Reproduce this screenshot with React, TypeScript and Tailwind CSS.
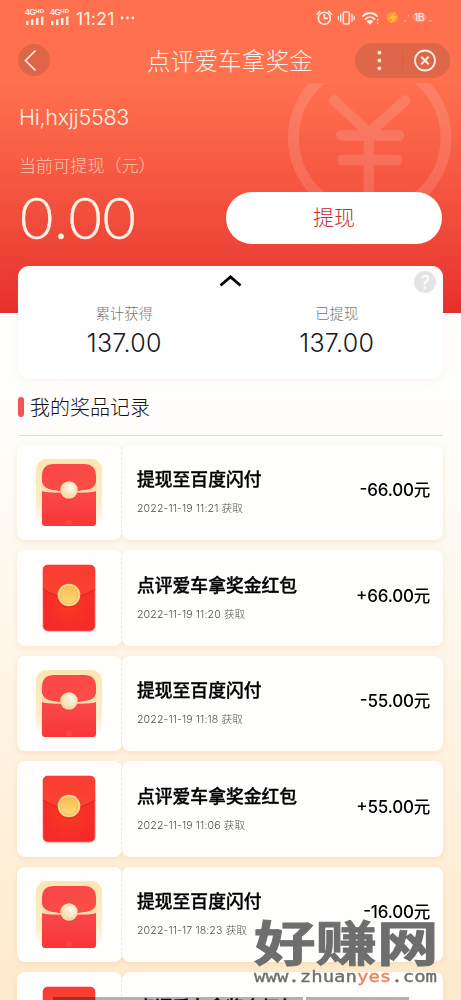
import React from "react";

const records = [
  { kind: "out", title: "提现至百度闪付", time: "2022-11-19 11:21", sign: "-", amount: "66.00" },
  { kind: "in", title: "点评爱车拿奖金红包", time: "2022-11-19 11:20", sign: "+", amount: "66.00" },
  { kind: "out", title: "提现至百度闪付", time: "2022-11-19 11:18", sign: "-", amount: "55.00" },
  { kind: "in", title: "点评爱车拿奖金红包", time: "2022-11-19 11:06", sign: "+", amount: "55.00" },
  { kind: "out", title: "提现至百度闪付", time: "2022-11-17 18:23", sign: "-", amount: "16.00" },
  { kind: "in", title: "点评爱车拿奖金红包", time: "2022-11-17 18:20", sign: "+", amount: "16.00" },
];

function Signal() {
  return (
    <div className="flex w-[20px] flex-col">
      <div className="flex h-[7px] items-start whitespace-nowrap font-['Liberation_Sans',sans-serif] text-[8.500px] leading-[7px] font-bold tracking-[-0.5px]">
        4G<span className="text-[6px] leading-[5px] tracking-[0px]">HD</span>
      </div>
      <svg className="h-[9px] w-[20px]" viewBox="0 0 20 9" fill="currentColor">
        <rect x="1" y="5" width="2.4" height="4" />
        <rect x="6" y="3.5" width="2.4" height="5.5" />
        <rect x="11" y="2" width="2.4" height="7" />
        <rect x="16" y="0.5" width="2.4" height="8.5" />
      </svg>
    </div>
  );
}

function StatusBar() {
  return (
    <div className="flex h-[36px] items-center pl-[25px] text-[#ffefe2]">
      <div className="mt-[-2px] flex gap-[5px]">
        <Signal />
        <Signal />
      </div>
      <span className="mt-[2px] ml-[6px] w-[40px] whitespace-nowrap text-[17.500px] leading-[20px] tracking-[0.3px]">11:21</span>
      <svg className="ml-[4px] h-[4px] w-[16px]" viewBox="0 0 16 4" fill="currentColor">
        <circle cx="2" cy="2" r="1.4" />
        <circle cx="7.5" cy="2" r="1.4" />
        <circle cx="13" cy="2" r="1.4" />
      </svg>
      <svg className="ml-[179px] h-[18px] w-[120px]" viewBox="315 9 120 18" fill="none" stroke="currentColor" strokeWidth="1.6" strokeLinecap="round">
        <circle cx="324.3" cy="18.2" r="6" />
        <path d="M324.3 14.8v3.6h3M317.2 14.2l2.6-2.8M331.4 14.2l-2.6-2.8" />
        <rect x="343.3" y="12" width="6" height="12" rx="1.5" />
        <path d="M340.7 14.5v7M352 14.5v7M338.4 16.5v3M354.2 16.5v3" strokeWidth="1.3" />
        <path d="M363 16c4-4 10-4 14 0M365.6 19c2.7-2.6 6.2-2.6 8.8 0" strokeWidth="1.8" />
        <path d="M366.500 21.300c2.300-1.800 4.700-1.800 7 0l-3.500 3.500z" fill="currentColor" stroke="none" />
        <path d="M377.8 19.8v.2M377.8 23v.2" strokeWidth="1.4" />
        <circle cx="392.3" cy="17.5" r="5.6" fill="#ff943f" stroke="none" />
        <path d="M395 12.500l-6 6h4l-2 4.500 6-6.500h-4z" fill="#ffc22f" stroke="#ffc22f" strokeWidth=".6" />
        <path d="M405 20.500v.5M408.500 15.500v.1M430.500 20.500v.5" opacity=".5" />
        <ellipse cx="419.500" cy="17.500" rx="7" ry="5" fill="#fff" opacity=".2" stroke="none" />
        <text x="414" y="21.300" fontSize="10.500" fill="currentColor" stroke="none" letterSpacing="-.6">1B</text>
      </svg>
    </div>
  );
}

function NavBar() {
  return (
    <div className="flex h-[48px] items-center pl-[18px]">
      <button className="flex h-[32px] w-[32px] items-center justify-center rounded-full bg-[#df6548]">
        <svg className="h-[32px] w-[32px]" viewBox="0 0 32 32" fill="none" stroke="#fff0e5" strokeWidth="1.6">
          <path d="M17.500 6.500L7.500 16.500L17.500 26.500" />
        </svg>
      </button>
      <h1 className="mt-[3px] ml-[97px] w-[170px] whitespace-nowrap text-[23.7px] leading-[32px] font-light text-[#fff1e8]">点评爱车拿奖金</h1>
      <svg className="ml-[38px] h-[35px] w-[95px]" viewBox="0 0 95 35" fill="none">
        <rect width="95" height="35" rx="17.500" fill="#de6649" />
        <path d="M47.500 8v19" stroke="#d95e43" />
        <g fill="#fff0e5">
          <circle cx="24.400" cy="9.700" r="1.900" />
          <circle cx="24.400" cy="17.500" r="1.900" />
          <circle cx="24.400" cy="25.300" r="1.900" />
        </g>
        <circle cx="70" cy="17.500" r="10" stroke="#fff0e5" strokeWidth="1.800" />
        <path d="M66.300 13.800l7.400 7.400M73.700 13.800l-7.400 7.400" stroke="#fff0e5" strokeWidth="2" />
      </svg>
    </div>
  );
}

function Coin() {
  return (
    <svg className="absolute top-[83px] left-[285px] h-[118px] w-[170px]" viewBox="285 83 170 118" fill="none" stroke="white">
      <g opacity=".12">
        <circle cx="369.700" cy="138" r="76.300" strokeWidth="11" />
        <path d="M334 100.500L369 133L405 100.500M341.500 135.500H399M342.500 160H397M369 133V201" strokeWidth="10.500" strokeLinecap="round" strokeLinejoin="round" />
      </g>
    </svg>
  );
}

function Envelope({ kind }: { kind: string }) {
  if (kind === "out") {
    return (
      <svg className="h-[72px] w-[70px]" viewBox="0 0 70 72">
        <defs>
          <linearGradient id="cream" x1="0" y1="0" x2="0" y2="1">
            <stop offset="0" stopColor="#fbe5b0" />
            <stop offset=".65" stopColor="#fcecc9" />
            <stop offset="1" stopColor="#fffaf3" />
          </linearGradient>
          <linearGradient id="flap" x1="0" y1="0" x2="1" y2="1">
            <stop offset="0" stopColor="#f94449" />
            <stop offset="1" stopColor="#fb5045" />
          </linearGradient>
          <linearGradient id="body" x1="0" y1="0" x2="0" y2="1">
            <stop offset="0" stopColor="#f9494b" />
            <stop offset="1" stopColor="#fa3537" />
          </linearGradient>
          <radialGradient id="pearl" cx=".58" cy=".4">
            <stop offset="0" stopColor="#fffaf0" />
            <stop offset="1" stopColor="#f8d9aa" />
          </radialGradient>
        </defs>
        <rect x="2" y="3" width="66" height="66" rx="11" fill="url(#cream)" />
        <path d="M8 35Q35 38 62 35V67Q62 70 59 70H11Q8 70 8 67Z" fill="url(#body)" />
        <path d="M8 20Q8 8 20 8H50Q62 8 62 20V27Q61 34 51 34Q35 37 18 34Q9 32 8 27Z" fill="url(#flap)" />
        <path d="M8 26Q9 33 20 34.500L28 35.500V36.500Q14 37 8 35ZM62 26Q61 33 50 34.500L42 35.500V36.500Q56 37 62 35Z" fill="#ffdcae" />
        <path d="M32 69v-4l3-2 3 2v4" fill="#fe5b4e" opacity=".35" />
        <circle cx="35" cy="35" r="9" fill="#d93b35" opacity=".3" />
        <circle cx="35" cy="34" r="8.700" fill="url(#pearl)" />
      </svg>
    );
  }
  return (
    <svg className="h-[72px] w-[70px]" viewBox="0 0 70 72">
      <defs>
        <linearGradient id="redTop" x1="0" y1="0" x2="0" y2="1">
          <stop offset="0" stopColor="#f83c32" />
          <stop offset="1" stopColor="#f9442f" />
        </linearGradient>
        <radialGradient id="redBody">
          <stop offset="0" stopColor="#fb3e22" />
          <stop offset="1" stopColor="#f52a29" />
        </radialGradient>
        <linearGradient id="gold" x1="0" y1="0" x2="0" y2="1">
          <stop offset="0" stopColor="#f6bd52" />
          <stop offset="1" stopColor="#ffd976" />
        </linearGradient>
      </defs>
      <rect x="9" y="4" width="52" height="66" rx="5" fill="url(#redBody)" stroke="#fb6b5d" strokeWidth=".8" />
      <path d="M9 9Q9 4 14 4H56Q61 4 61 9V28Q35 45 9 28Z" fill="url(#redTop)" />
      <path d="M9 28Q35 45 61 28" stroke="#dc2020" strokeWidth="1.200" fill="none" opacity=".7" />
      <circle cx="35" cy="35.500" r="11.700" fill="#cf201e" opacity=".35" />
      <circle cx="35" cy="34" r="11.300" fill="#f9d78c" />
      <circle cx="35" cy="34" r="8.800" fill="url(#gold)" stroke="#f2b34c" strokeWidth=".8" />
    </svg>
  );
}

function Summary({ label, value }: { label: string; value: string }) {
  return (
    <div className="flex flex-1 flex-col items-center">
      <span className="text-[14.3px] leading-[20px] font-light text-[#777]">{label}</span>
      <span className="mt-[5px] text-[25px] leading-[28px] font-light tracking-[0.3px] text-[#151a28]">{value}</span>
    </div>
  );
}

function RecordRow({ item }: { item: (typeof records)[number] }) {
  return (
    <div className="flex h-[95.500px] shrink-0 drop-shadow-[0_2px_3px_rgba(225,163,80,0.2)]">
      <div className="flex w-[105px] items-center justify-center rounded-[8px] bg-[#fffefd]">
        <div className="mt-[-1px] ml-[-2px]"><Envelope kind={item.kind} /></div>
      </div>
      <div className="relative flex flex-1 items-center justify-between rounded-[8px] bg-[#fffefd] pr-[13px] pl-[15px]">
        <div className="absolute top-[7px] bottom-[7px] left-[-1px] border-l border-dashed border-[#f3eadf]" />
        <div>
          <div className="text-[17.8px] leading-[24px] font-medium whitespace-nowrap text-black [-webkit-text-stroke:0.35px]">{item.title}</div>
          <div className="mt-[10px] text-[10.6px] leading-[14px] font-light tracking-[0.12px] whitespace-nowrap text-[#505050]">{item.time} 获取</div>
        </div>
        <div className="mt-[-4px] flex text-[17px] leading-[24px] font-medium tracking-[-0.2px] whitespace-nowrap text-black">
          <span className="mt-[-2px]">{item.sign}</span>
          {item.amount}
          <span className="text-[16.500px]">元</span>
        </div>
      </div>
    </div>
  );
}

export default function App() {
  return (
    <main className="relative h-[1000px] w-[461px] overflow-hidden bg-linear-to-b from-[#fffefd] from-40% to-[#feeacc] font-['Inter','Noto_Sans_CJK_SC',sans-serif]">
      <header className="relative h-[313px] bg-linear-to-b from-[#ff704f] from-26% to-[#e72e2e]">
        <StatusBar />
        <NavBar />
        <Coin />
        <div className="relative px-[19px] pt-[20px] text-[#fff3e8]">
          <div className="text-[21.500px] leading-[26px] font-light tracking-[-0.25px]">Hi,hxjj5583</div>
          <div className="flex justify-between">
            <div className="w-[200px]">
              <div className="mt-[24px] text-[17px] leading-[24px] font-light tracking-[0.1px] whitespace-nowrap text-[#ffc3ad]">当前可提现（元）</div>
              <div className="mt-[9px] pl-[1px] font-['Lato',sans-serif] text-[57.500px] leading-[60px] font-light tracking-[0.8px] [-webkit-text-stroke:0.4px]">0.00</div>
            </div>
            <button className="mt-[62px] h-[52px] w-[216px] rounded-full bg-white text-[21px] font-light text-[#c92e32]">提现</button>
          </div>
        </div>
      </header>

      <section className="relative mx-[18px] mt-[-47px] h-[113px] rounded-[11px] bg-[#fffefe] shadow-[0_2px_7px_rgba(231,130,90,0.1)]">
        <svg className="absolute top-[9px] left-[201px] h-[12px] w-[23px]" viewBox="0 0 23 12" fill="none" stroke="#050505" strokeWidth="2.900">
          <path d="M1.500 10.500L11.500 2L21.500 10.500" />
        </svg>
        <div className="absolute top-[5px] right-[7px] flex h-[22px] w-[22px] items-center justify-center rounded-full bg-[#e4e4e4] text-[18px] text-white">?</div>
        <div className="flex pt-[38px]">
          <Summary label="累计获得" value="137.00" />
          <Summary label="已提现" value="137.00" />
        </div>
      </section>

      <section>
        <div className="mx-[18px] flex h-[57px] items-center border-b border-[#dedcda]">
          <div className="h-[20px] w-[6px] rounded-[3px] bg-[#f05553]" />
          <h2 className="mt-[1px] ml-[6px] text-[20px] leading-[28px] font-light text-[#111]">我的奖品记录</h2>
        </div>
        <div className="mr-[18px] ml-[17px] flex flex-col gap-[10px] pt-[8.500px]">
          {records.map((item, i) => <RecordRow key={i} item={item} />)}
        </div>
      </section>

      <div className="absolute top-[997px] left-[53px] flex gap-[3px]">
        <div className="h-[3px] w-[250px] bg-black/30" />
        <div className="h-[3px] w-[103px] bg-black/30" />
      </div>
      <div className="absolute top-[921px] left-[254px] text-[#6e6e6e]">
        <div className="h-[46px] w-[186px]">
          <div className="origin-top scale-y-[0.77] text-[61.500px] leading-[60px] font-bold whitespace-nowrap [-webkit-text-stroke:1.2px]">好赚网</div>
        </div>
        <div className="origin-bottom scale-y-[0.85] font-['DejaVu_Sans_Mono',monospace] text-[19px] leading-[16px] whitespace-nowrap [-webkit-text-stroke:0.4px]">
          www.zhuan<span className="text-[#f18058]">yes</span>.com
        </div>
      </div>
    </main>
  );
}
